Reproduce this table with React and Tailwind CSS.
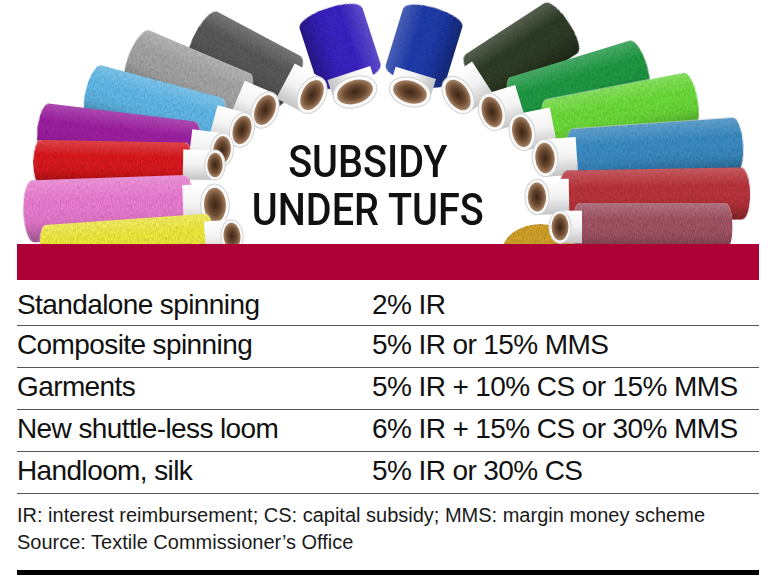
import React from "react";

const spools = [
  { x: 355, y: 92, a: 252, L: 60, D: 66, c: 18, color: "#3a22c8" },
  { x: 410, y: 92, a: 287, L: 60, D: 62, c: 18, color: "#1e3cb0" },
  { x: 312, y: 95, a: 208, L: 95, D: 58, c: 28, color: "#5a5a5a" },
  { x: 458, y: 95, a: 327, L: 95, D: 60, c: 28, color: "#2f3d26" },
  { x: 265, y: 110, a: 203, L: 110, D: 56, c: 28, color: "#a9a9a9" },
  { x: 492, y: 112, a: 343, L: 125, D: 56, c: 28, color: "#1e9e45" },
  { x: 242, y: 130, a: 195, L: 125, D: 52, c: 28, color: "#62bdef" },
  { x: 522, y: 132, a: 349, L: 140, D: 55, c: 30, color: "#6fe23a" },
  { x: 222, y: 150, a: 187, L: 148, D: 50, c: 30, color: "#a21fa6" },
  { x: 545, y: 158, a: 356, L: 160, D: 55, c: 30, color: "#3c8fc9" },
  { x: 215, y: 165, a: 181, L: 145, D: 44, c: 30, color: "#e1161d" },
  { x: 537, y: 197, a: 359, L: 175, D: 52, c: 30, color: "#c0343c" },
  { x: 215, y: 205, a: 178, L: 152, D: 62, c: 30, color: "#f27fd8" },
  { x: 560, y: 227, a: 0, L: 145, D: 48, c: 20, color: "#a65566" },
  { x: 232, y: 236, a: 176, L: 160, D: 48, c: 25, color: "#f6f03c" },
];

const rows = [
  ["Standalone spinning", "2% IR"],
  ["Composite spinning", "5% IR or 15% MMS"],
  ["Garments", "5% IR + 10% CS or 15% MMS"],
  ["New shuttle-less loom", "6% IR + 15% CS or 30% MMS"],
  ["Handloom, silk", "5% IR or 30% CS"],
];

function Spool({ s }) {
  const d = s.D * 0.68;
  const e = s.D * 0.16;
  const flip = Math.cos((s.a * Math.PI) / 180) < 0;
  const t = `translate(${s.x} ${s.y}) rotate(${s.a})${flip ? " scale(1 -1)" : ""}`;
  const h = s.D / 2;
  const body = `M ${s.c} ${-h} H ${s.c + s.L} A ${e} ${h} 0 0 1 ${s.c + s.L} ${h} H ${s.c} A ${e} ${h} 0 0 1 ${s.c} ${-h} Z`;
  return (
    <g transform={t}>
      <path d={body} fill={s.color} filter="url(#yarn)" />
      <path d={body} fill="url(#shade)" />
      <rect x={0} y={-d / 2} width={s.c + 2} height={d} fill="url(#core)" />
      <ellipse cx={0} cy={0} rx={d * 0.34} ry={d / 2} fill="#fafafa" stroke="#d2d2d2" strokeWidth="1" />
      <ellipse cx={0} cy={0} rx={d * 0.26} ry={d * 0.41} fill="url(#hole)" />
    </g>
  );
}

function Threads() {
  return (
    <svg className="absolute inset-0 w-full h-full" viewBox="0 0 780 244">
      <defs>
        <filter id="yarn" x="-5%" y="-5%" width="110%" height="110%">
          <feTurbulence type="fractalNoise" baseFrequency="0.9 0.3" numOctaves="2" seed="4" result="noise" />
          <feColorMatrix in="noise" type="saturate" values="0" result="g" />
          <feComponentTransfer in="g" result="g2">
            <feFuncR type="linear" slope="0.9" intercept="0.4" />
            <feFuncG type="linear" slope="0.9" intercept="0.4" />
            <feFuncB type="linear" slope="0.9" intercept="0.4" />
            <feFuncA type="linear" slope="0" intercept="1" />
          </feComponentTransfer>
          <feBlend in="SourceGraphic" in2="g2" mode="multiply" result="b" />
          <feComposite in="b" in2="SourceGraphic" operator="in" />
        </filter>
        <linearGradient id="shade" x1="0" y1="0" x2="0" y2="1">
          <stop offset="0" stopColor="#fff" stopOpacity="0.2" />
          <stop offset="0.35" stopColor="#fff" stopOpacity="0" />
          <stop offset="0.7" stopColor="#000" stopOpacity="0.05" />
          <stop offset="1" stopColor="#000" stopOpacity="0.3" />
        </linearGradient>
        <linearGradient id="core" x1="0" y1="0" x2="0" y2="1">
          <stop offset="0" stopColor="#ffffff" />
          <stop offset="0.5" stopColor="#f2f2f2" />
          <stop offset="1" stopColor="#c4c4c4" />
        </linearGradient>
        <radialGradient id="hole">
          <stop offset="0" stopColor="#3b2516" />
          <stop offset="0.6" stopColor="#6e4c33" />
          <stop offset="1" stopColor="#a88466" />
        </radialGradient>
      </defs>
      <ellipse cx="540" cy="252" rx="38" ry="28" fill="#d6a52a" filter="url(#yarn)" />
      {spools.map((s, i) => (
        <Spool key={i} s={s} />
      ))}
    </svg>
  );
}

export default function App() {
  return (
    <div className="w-[780px] h-[579px] bg-white overflow-hidden" style={{ fontFamily: '"Liberation Sans", Arial, sans-serif' }}>
      {/* photo + title */}
      <div className="relative h-[244px] overflow-hidden">
        <Threads />
        <div className="relative flex justify-center pt-[138px] pr-[44px]">
          <div
            className="flex flex-col items-center scale-x-[0.88] text-[45px] leading-[48px] font-medium text-[#111]"
            style={{ fontFamily: "Roboto, 'Liberation Sans', sans-serif" }}
          >
            <div>SUBSIDY</div>
            <div>UNDER TUFS</div>
          </div>
        </div>
      </div>

      <div className="ml-[17px] w-[742px]">
        <div className="h-[36px] bg-[#ad0036]" />
        {rows.map(([a, b], i) => (
          <div
            key={a}
            className={`grid grid-cols-[355px_1fr] border-b border-[#555] text-[28px] leading-[37px] tracking-[-0.6px] text-[#111] ${
              i === 0 ? "h-[46px] pt-[6px]" : "h-[42px]"
            }`}
          >
            <div>{a}</div>
            <div>{b}</div>
          </div>
        ))}
        <div className="mt-[8px] text-[20px] leading-[27px] text-[#1a1a1a]">
          <div>IR: interest reimbursement; CS: capital subsidy; MMS: margin money scheme</div>
          <div>Source: Textile Commissioner’s Office</div>
        </div>
        <div className="mt-[14px] h-[5px] bg-black" />
      </div>
    </div>
  );
}
